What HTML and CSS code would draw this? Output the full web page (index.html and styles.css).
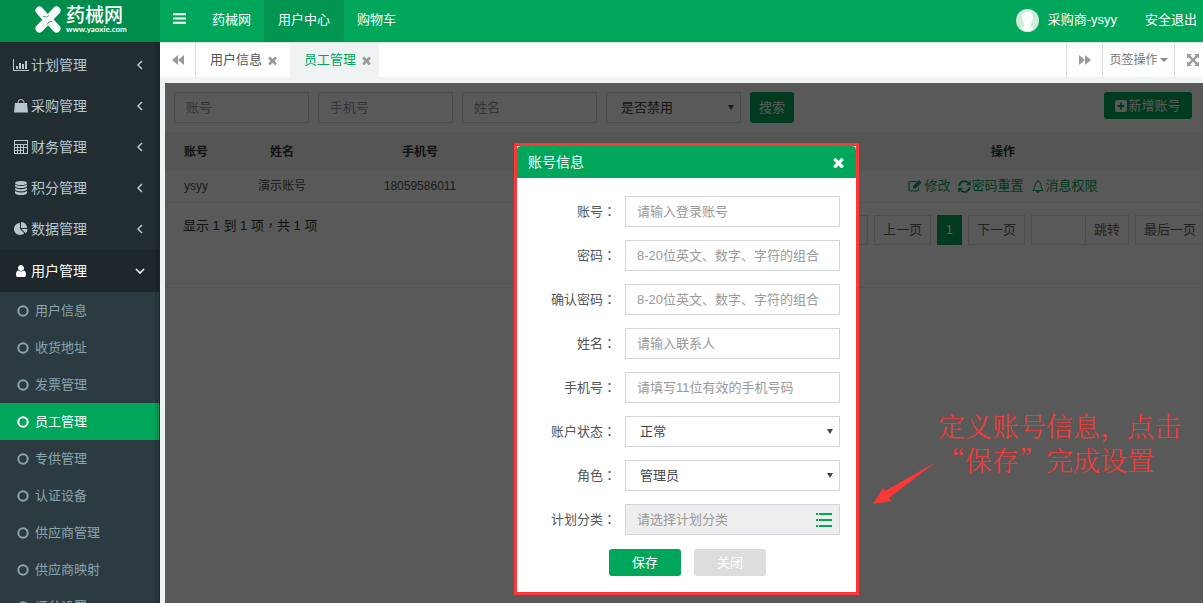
FILE: index.html
```html
<!DOCTYPE html>
<html lang="zh-CN">
<head>
<meta charset="utf-8">
<title>药械网 - 员工管理</title>
<link rel="stylesheet" href="styles.css">
</head>
<body>
<svg class="sprite" aria-hidden="true">
  <symbol id="i-bars" viewBox="0 0 1792 1792"><path d="M1664 1344v128q0 26-19 45t-45 19h-1408q-26 0-45-19t-19-45v-128q0-26 19-45t45-19h1408q26 0 45 19t19 45zm0-512v128q0 26-19 45t-45 19h-1408q-26 0-45-19t-19-45v-128q0-26 19-45t45-19h1408q26 0 45 19t19 45zm0-512v128q0 26-19 45t-45 19h-1408q-26 0-45-19t-19-45v-128q0-26 19-45t45-19h1408q26 0 45 19t19 45z"/></symbol>
  <symbol id="i-times" viewBox="256 256 1280 1280"><path d="M1490 1322q0 40-28 68l-136 136q-28 28-68 28t-68-28l-294-294-294 294q-28 28-68 28t-68-28l-136-136q-28-28-28-68t28-68l294-294-294-294q-28-28-28-68t28-68l136-136q28-28 68-28t68 28l294 294 294-294q28-28 68-28t68 28l136 136q28 28 28 68t-28 68l-294 294 294 294q28 28 28 68z"/></symbol>
  <symbol id="i-user" viewBox="128 0 1536 1792"><path d="M1536 1399q0 109-62.5 187t-150.5 78h-854q-88 0-150.5-78t-62.5-187q0-85 8.5-160.5t31.5-152 58.5-131 94-89 134.5-34.5q131 128 313 128t313-128q76 0 134.5 34.5t94 89 58.5 131 31.5 152 8.5 160.5zm-256-887q0 159-112.5 271.5t-271.5 112.5-271.5-112.5-112.5-271.5 112.5-271.5 271.5-112.5 271.5 112.5 112.5 271.5z"/></symbol>
  <symbol id="i-pie" viewBox="0 0 1792 1792"><path d="M768 890l546 546q-106 108-247.5 168t-298.5 60q-209 0-385.5-103t-279.5-279.5-103-385.5 103-385.5 279.5-279.5 385.5-103v762zm187 6h773q0 157-60 298.5t-168 247.5zm709-128h-768v-768q209 0 385.5 103t279.5 279.5 103 385.5z"/></symbol>
  <symbol id="i-chart" viewBox="0 0 16 14"><path d="M0 1h1v11h15v1H0zM3 8h2v3H3zM6 5h2v6H6zM9 6h2v5H9zM12 3h2v8h-2z"/></symbol>
  <symbol id="i-bag" viewBox="0 0 14 14"><path d="M1 4h12l1 9.500H0z"/><path d="M4 6V3.500a3 3 0 0 1 6 0V6" fill="none" stroke="currentColor"/></symbol>
  <symbol id="i-calc" viewBox="0 0 14 14"><path fill-rule="evenodd" d="M0 0h14v14H0zM1 1v3h12V1zM1 5v2h2V5zM4 5v2h2V5zM7 5v2h2V5zM10 5v2h3V5zM1 8v2h2V8zM4 8v2h2V8zM7 8v2h2V8zM1 11v2h2v-2zM4 11v2h2v-2zM7 11v2h2v-2zM10 8v5h3V8z"/></symbol>
  <symbol id="i-db" viewBox="0 0 12 14"><ellipse cx="6" cy="2" rx="6" ry="2"/><path d="M0 3.500q6 3 12 0V5q-1 2-6 2T0 5zM0 6.700q6 3 12 0v1.500q-1 2-6 2t-6-2zM0 10q6 3 12 0v2q-1 2-6 2t-6-2z"/></symbol>
  <symbol id="i-left" viewBox="0 0 6 10"><path d="M5 1 1 5l4 4" fill="none" stroke="currentColor" stroke-width="1.500"/></symbol>
  <symbol id="i-down" viewBox="0 0 10 6"><path d="m1 1 4 4 4-4" fill="none" stroke="currentColor" stroke-width="1.600"/></symbol>
  <symbol id="i-ring" viewBox="0 0 12 12"><circle cx="6" cy="6" r="4.700" fill="none" stroke="currentColor" stroke-width="2"/></symbol>
  <symbol id="i-back" viewBox="0 0 12 10"><path d="M6 0v10L0 5zM12 0v10L6 5z"/></symbol>
  <symbol id="i-fwd" viewBox="0 0 12 10"><path d="M0 0v10l6-5zM6 0v10l6-5z"/></symbol>
  <symbol id="i-full" viewBox="0 0 12 12"><path d="M0 0h4.500L3.200 1.500 6 4.400l2.800-2.900L7.500 0H12v4.500l-1.500-1.300L7.600 6l2.900 2.800L12 7.500V12H7.500l1.300-1.500L6 7.600l-2.800 2.900L4.500 12H0V7.500l1.500 1.300L4.400 6 1.500 3.200 0 4.500z"/></symbol>
  <symbol id="i-plus" viewBox="0 0 12 12"><path fill-rule="evenodd" d="M2 0h8q2 0 2 2v8q0 2-2 2H2q-2 0-2-2V2q0-2 2-2zM5 2.500V5H2.500v2H5v2.500h2V7h2.500V5H7V2.500z"/></symbol>
  <symbol id="i-edit" viewBox="0 0 14 12"><path d="M9 1.500H2.500Q1 1.500 1 3v6.500Q1 11 2.500 11H9q1.500 0 1.500-1.500V8" fill="none" stroke="currentColor" stroke-width="1.200"/><path d="m5 8.500.3-2.800L11 0l2.600 2.500L8 8.200z"/></symbol>
  <symbol id="i-refresh" viewBox="0 0 13 13"><path d="M1.300 6A5.200 5.200 0 0 1 10.500 3M11.700 7a5.200 5.200 0 0 1-9.200 3" fill="none" stroke="currentColor" stroke-width="1.700"/><path d="M12.800.3v5H7.900zM.2 12.700v-5h4.900z"/></symbol>
  <symbol id="i-bell" viewBox="0 0 12 13"><path d="M1 10.500q2-2 2-5.500 0-3 3-3.500Q9 2 9 5q0 3.500 2 5.500z" fill="none" stroke="currentColor"/><path d="M5.300 0h1.400v1.800H5.300zM4.300 11h3.400q-.2 2-1.700 2t-1.700-2z"/></symbol>
  <symbol id="i-list" viewBox="0 0 16 14"><path d="M0 0h2v2H0zM3 0h13v2H3zM0 6h2v2H0zM3 6h13v2H3zM0 12h2v2H0zM3 12h13v2H3z"/></symbol>
</svg>

<div class="app">
  <aside class="sidebar">
    <a class="brand" href="#">
      <svg class="brand-mark" viewBox="0 0 26 27"><path d="M4.500 4.500l6 7M21.500 4.500l-17 18M15.500 16l6 6.500" fill="none" stroke="currentColor" stroke-width="8" stroke-linecap="round"/><path d="M8 10.500q4 1.500 6-1M12 18.500q1.500-3.500 5-3" fill="none" stroke="#008d4c" stroke-width=".8"/></svg>
      <span class="brand-text"><strong class="brand-name">药械网</strong><span class="brand-url">www.yaoxie.com</span></span>
    </a>
    <nav class="menu">
      <a class="menu-item" href="#"><svg class="menu-icon"><use href="#i-chart"/></svg>计划管理<svg class="chev"><use href="#i-left"/></svg></a>
      <a class="menu-item" href="#"><svg class="menu-icon"><use href="#i-bag"/></svg>采购管理<svg class="chev"><use href="#i-left"/></svg></a>
      <a class="menu-item" href="#"><svg class="menu-icon"><use href="#i-calc"/></svg>财务管理<svg class="chev"><use href="#i-left"/></svg></a>
      <a class="menu-item" href="#"><svg class="menu-icon"><use href="#i-db"/></svg>积分管理<svg class="chev"><use href="#i-left"/></svg></a>
      <a class="menu-item" href="#"><svg class="menu-icon"><use href="#i-pie"/></svg>数据管理<svg class="chev"><use href="#i-left"/></svg></a>
      <a class="menu-item open" href="#"><svg class="menu-icon"><use href="#i-user"/></svg>用户管理<svg class="chev"><use href="#i-down"/></svg></a>
      <div class="submenu">
        <a class="sub-item" href="#"><svg class="ring"><use href="#i-ring"/></svg>用户信息</a>
        <a class="sub-item" href="#"><svg class="ring"><use href="#i-ring"/></svg>收货地址</a>
        <a class="sub-item" href="#"><svg class="ring"><use href="#i-ring"/></svg>发票管理</a>
        <a class="sub-item current" href="#"><svg class="ring"><use href="#i-ring"/></svg>员工管理</a>
        <a class="sub-item" href="#"><svg class="ring"><use href="#i-ring"/></svg>专供管理</a>
        <a class="sub-item" href="#"><svg class="ring"><use href="#i-ring"/></svg>认证设备</a>
        <a class="sub-item" href="#"><svg class="ring"><use href="#i-ring"/></svg>供应商管理</a>
        <a class="sub-item" href="#"><svg class="ring"><use href="#i-ring"/></svg>供应商映射</a>
        <a class="sub-item" href="#"><svg class="ring"><use href="#i-ring"/></svg>评分设置</a>
      </div>
    </nav>
  </aside>

  <div class="main">
    <header class="topbar">
      <button class="toggle" type="button" aria-label="菜单"><svg><use href="#i-bars"/></svg></button>
      <a class="top-link" href="#">药械网</a>
      <a class="top-link active" href="#">用户中心</a>
      <a class="top-link" href="#">购物车</a>
      <a class="account" href="#">
        <svg class="avatar" viewBox="0 0 23 23"><circle cx="11.500" cy="11.500" r="11.500" fill="#cdecdc"/><path d="M11.500 3c4 0 5.500 2.500 5.300 6-.2 2.500-1.300 5-2.300 6 0 2.500 1 3 3 4.500-3 3.500-9 3.500-12 0 2-1.500 3-2 3-4.500-1-1-2.100-3.500-2.300-6C6 5.500 7.500 3 11.500 3z" fill="#fff"/></svg>
        采购商-ysyy
      </a>
      <a class="logout" href="#">安全退出</a>
    </header>

    <div class="tabs">
      <button class="tab-btn back" type="button" aria-label="左移"><svg class="arrows"><use href="#i-back"/></svg></button>
      <a class="tab" href="#">用户信息<svg class="tab-x"><use href="#i-times"/></svg></a>
      <a class="tab active" href="#">员工管理<svg class="tab-x"><use href="#i-times"/></svg></a>
      <button class="tab-btn fwd" type="button" aria-label="右移"><svg class="arrows"><use href="#i-fwd"/></svg></button>
      <button class="tab-btn ops" type="button">页签操作<span class="caret"></span></button>
      <button class="tab-btn full" type="button" aria-label="全屏"><svg class="expand"><use href="#i-full"/></svg></button>
    </div>

    <section class="frame">
      <form class="filters">
        <input class="field" type="text" placeholder="账号" aria-label="账号">
        <input class="field" type="text" placeholder="手机号" aria-label="手机号">
        <input class="field" type="text" placeholder="姓名" aria-label="姓名">
        <span class="select"><select class="field" aria-label="是否禁用"><option>是否禁用</option></select></span>
        <button class="btn search" type="button">搜索</button>
        <button class="btn add" type="button"><svg><use href="#i-plus"/></svg>新增账号</button>
      </form>
      <table class="grid">
        <colgroup><col class="c-id"><col class="c-name"><col class="c-phone"><col class="c-rest"><col class="c-ops"></colgroup>
        <thead><tr><th>账号</th><th>姓名</th><th>手机号</th><th></th><th>操作</th></tr></thead>
        <tbody><tr><td>ysyy</td><td>演示账号</td><td>18059586011</td><td></td>
          <td><span class="ops-links">
            <a href="#"><svg class="edit"><use href="#i-edit"/></svg>修改</a>
            <a class="tight" href="#"><svg class="refresh"><use href="#i-refresh"/></svg>密码重置</a>
            <a href="#"><svg class="bell"><use href="#i-bell"/></svg>消息权限</a>
          </span></td></tr></tbody>
      </table>
      <div class="footer">
        <span class="info">显示 1 到 1 项<span class="centered" lang="zh-TW">，</span>共 1 项</span>
        <div class="pager">
          <button class="page" type="button">首页</button>
          <button class="page" type="button">上一页</button>
          <button class="page on" type="button">1</button>
          <button class="page" type="button">下一页</button>
          <span class="jump"><input class="page-no" type="text" aria-label="页码"><button class="page" type="button">跳转</button></span>
          <button class="page" type="button">最后一页</button>
        </div>
      </div>

      <div class="mask"></div>

      <div class="dialog" role="dialog" aria-labelledby="dlg-title">
        <div class="dialog-card">
          <div class="dialog-head">
            <span id="dlg-title">账号信息</span>
            <button class="dialog-x" type="button" aria-label="关闭窗口"><svg><use href="#i-times"/></svg></button>
          </div>
          <form class="dialog-form">
            <div class="row"><label for="f1">账号<span class="centered" lang="zh-TW">：</span></label><input class="field" id="f1" type="text" placeholder="请输入登录账号"></div>
            <div class="row"><label for="f2">密码<span class="centered" lang="zh-TW">：</span></label><input class="field" id="f2" type="password" placeholder="8-20位英文、数字、字符的组合"></div>
            <div class="row"><label for="f3">确认密码<span class="centered" lang="zh-TW">：</span></label><input class="field" id="f3" type="password" placeholder="8-20位英文、数字、字符的组合"></div>
            <div class="row"><label for="f4">姓名<span class="centered" lang="zh-TW">：</span></label><input class="field" id="f4" type="text" placeholder="请输入联系人"></div>
            <div class="row"><label for="f5">手机号<span class="centered" lang="zh-TW">：</span></label><input class="field" id="f5" type="text" placeholder="请填写11位有效的手机号码"></div>
            <div class="row"><label for="f6">账户状态<span class="centered" lang="zh-TW">：</span></label><span class="select"><select class="field" id="f6"><option>正常</option></select></span></div>
            <div class="row"><label for="f7">角色<span class="centered" lang="zh-TW">：</span></label><span class="select"><select class="field" id="f7"><option>管理员</option></select></span></div>
            <div class="row"><label for="f8">计划分类<span class="centered" lang="zh-TW">：</span></label><span class="picker"><input class="field" id="f8" type="text" placeholder="请选择计划分类" readonly><svg class="list"><use href="#i-list"/></svg></span></div>
            <div class="actions"><button class="btn save" type="button">保存</button><button class="btn close" type="button">关闭</button></div>
          </form>
        </div>
      </div>

      <div class="note">
        <p class="note-text">定义账号信息，点击<br>“保存”完成设置</p>
        <svg class="note-arrow" viewBox="0 0 63 43"><path d="M0 42 10 26l2 3L63 0 16 36l3 3z"/></svg>
      </div>
    </section>
  </div>
</div>
</body>
</html>
```
FILE: styles.css
```css
* { box-sizing: border-box; }
body {
  margin: 0;
  font: 13px/20px "Liberation Sans", "Noto Sans CJK SC", sans-serif;
  color: #333;
  overflow: hidden;
}
a { color: inherit; text-decoration: none; }
button, input, select { font: inherit; color: inherit; margin: 0; }
button { border: 0; background: none; padding: 0; cursor: pointer; }
svg { fill: currentColor; flex: none; display: block; }
.sprite { position: absolute; width: 0; height: 0; }

.app { display: grid; grid-template-columns: 160px 1fr; height: 100vh; }

/* sidebar */
.sidebar {
  position: relative;
  background: #222d32;
  overflow: hidden;
}
.sidebar::after {
  content: "";
  position: absolute;
  top: 42px; right: 0; bottom: 0;
  width: 4px;
  border-right: 1px solid #1e282c;
  background: rgba(0, 0, 0, .1);
}
.brand {
  display: flex;
  gap: 5px;
  height: 42px;
  padding: 6px 0 0 35px;
  background: #008d4c;
  color: #fff;
}
.brand-mark { width: 26px; height: 27px; }
.brand-text { display: flex; flex-direction: column; }
.brand-name { font-size: 19px; line-height: 19px; font-weight: 500; }
.brand-url { font: 700 8px/8px Lato, sans-serif; }
.menu { padding-top: 2px; }
.menu-item {
  display: flex;
  align-items: center;
  gap: 2px;
  height: 41px;
  padding: 0 15px 0 13px;
  font-size: 14px;
  color: #b8c7ce;
}
.menu-item.open { height: 43px; background: #1e282c; color: #fff; }
.menu-icon { width: 16px; height: 14px; }
.chev { width: 10px; height: 10px; margin-left: auto; }
.menu-item.open .chev { height: 6px; }
.submenu { background: #2c3b41; color: #8aa4af; }
.sub-item {
  display: flex;
  align-items: center;
  gap: 6px;
  height: 37px;
  padding-left: 17px;
}
.sub-item.current { background: #00a65a; color: #fff; }
.ring { width: 12px; height: 12px; }

/* top bar */
.main { display: flex; flex-direction: column; min-width: 0; overflow: hidden; background: #eff3f4; }
.topbar {
  display: flex;
  height: 42px;
  padding-right: 6px;
  background: #00a65a;
  color: #fff;
  line-height: 40px;
}
.toggle { width: 39px; padding: 0 0 6px 12px; }
.toggle svg { width: 15px; height: 15px; }
.top-link { padding: 0 13px; }
.top-link.active { padding: 0 14px; background: #009551; }
.account { display: flex; align-items: center; gap: 9px; margin-left: auto; padding-bottom: 2px; }
.avatar { width: 23px; height: 23px; }
.logout { margin-left: 28px; }

/* page tabs */
.tabs {
  display: flex;
  height: 35px;
  border-top: 1px solid #ddd;
  background: #fff;
  color: #555;
}
.tab { display: flex; align-items: center; gap: 6px; padding: 0 13px 0 14px; }
.tab.active { padding-right: 8px; background: #eff3f4; color: #00a65a; }
.tab-x { width: 9px; height: 9px; color: #999; }
.tab-btn { display: flex; align-items: center; justify-content: center; border-left: 1px solid #ddd; color: #999; }
.tab-btn.back { width: 36px; border-left: 0; border-right: 1px solid #ddd; }
.tab-btn.fwd { width: 36px; margin-left: auto; }
.tab-btn.ops { gap: 2px; width: 72px; font-size: 12px; color: #777; }
.tab-btn.full { width: 29px; justify-content: flex-start; padding-left: 12px; }
.arrows { width: 12px; height: 10px; }
.expand { width: 12px; height: 12px; }
.caret { border: 4px solid transparent; border-top-color: #888; border-bottom: 0; }

/* framed page */
.frame {
  position: relative;
  flex: 1;
  margin: 6px 0 0 5px;
  background: #fff;
  overflow: hidden;
}
.mask { position: absolute; inset: 0; background: rgba(0, 0, 0, .65); }
.field {
  width: 100%;
  height: 31px;
  border: 1px solid #d2d6de;
  border-radius: 0;
  padding: 0 11px;
  background: #fff;
  color: #444;
  outline: 0;
}
.field::placeholder { color: #999; opacity: 1; }
select.field { appearance: none; padding-left: 14px; }
.select { position: relative; display: block; }
.select::after {
  content: "";
  position: absolute;
  right: 7px; top: 13px;
  border: 3px solid transparent;
  border-top: 5px solid #444;
  border-bottom: 0;
  pointer-events: none;
}
.filters { display: flex; align-items: flex-start; gap: 9px; padding: 9px 11px 9px 9px; }
.filters > .field, .filters > .select { width: 135px; }
.btn { border-radius: 3px; background: #00a65a; color: #fff; }
.search { width: 44px; height: 31px; }
.add { display: flex; align-items: center; justify-content: center; gap: 1px; width: 88px; height: 27px; margin-left: auto; }
.add svg { width: 12px; height: 12px; }

.grid { width: 100%; table-layout: fixed; border-collapse: collapse; text-align: center; font-size: 12px; }
.c-id { width: 62px; }
.c-name { width: 110px; }
.c-phone { width: 166px; }
.c-ops { width: 400px; }
.grid th { height: 39px; padding: 0; background: #f3f3f3; }
.grid td { height: 31px; padding: 0; border-bottom: 1px solid #eee; color: #555; }
.ops-links { display: flex; justify-content: center; gap: 8px; font-size: 13px; color: #00a65a; }
.ops-links a { display: flex; align-items: center; gap: 2px; }
.ops-links .tight { gap: 0; }
.edit { width: 14px; height: 12px; }
.refresh { width: 13px; height: 13px; }
.bell { width: 12px; height: 13px; }

.footer { display: flex; height: 85px; padding: 12px 0 0 18px; border-bottom: 1px solid #eee; }
.info { line-height: 20px; }
.pager { display: flex; gap: 6px; margin: 0 -2px 0 auto; }
.page { height: 30px; padding: 0 8px; border: 1px solid #ddd; color: #666; }
.page.on { width: 25px; border: 0; background: #00a65a; color: #fff; }
.jump { display: flex; }
.page-no { width: 54px; height: 30px; border: 1px solid #ddd; border-right: 0; background: none; }

/* dialog */
.dialog {
  position: absolute;
  top: 60px; left: 349px;
  width: 345px;
  border: 3px solid #fb3737;
}
.dialog-card { background: #fff; }
.dialog-head {
  display: flex;
  align-items: center;
  justify-content: space-between;
  height: 32px;
  padding: 0 12px 0 11px;
  background: #00a65a;
  border-radius: 4px 4px 0 0;
  color: #fff;
  font-size: 14px;
}
.dialog-head svg { width: 11px; height: 11px; }
.dialog-form { display: grid; gap: 13px; padding: 18px 16px 16px; color: #555; }
.row { display: grid; grid-template-columns: 1fr 215px; gap: 9px; align-items: center; }
.row label { text-align: right; }
.centered { font-family: "Noto Sans CJK TC", sans-serif; }
.picker { position: relative; }
.picker .field { display: block; background: #eee; }
.list { position: absolute; right: 8px; top: 9px; width: 16px; height: 14px; color: #00a65a; }
.actions { display: flex; gap: 13px; padding: 1px 0 0 76px; }
.actions .btn { width: 72px; height: 27px; }
.actions .close { background: #ddd; }

/* callout */
.note { position: absolute; top: 326px; left: 708px; color: #fb3737; }
.note-text {
  margin: 0 0 0 65px;
  font: 300 27px/34px "Noto Serif CJK SC", "Noto Sans CJK SC", serif;
  white-space: nowrap;
}
.note-arrow { position: absolute; left: 0; top: 53px; width: 63px; height: 43px; }
```
